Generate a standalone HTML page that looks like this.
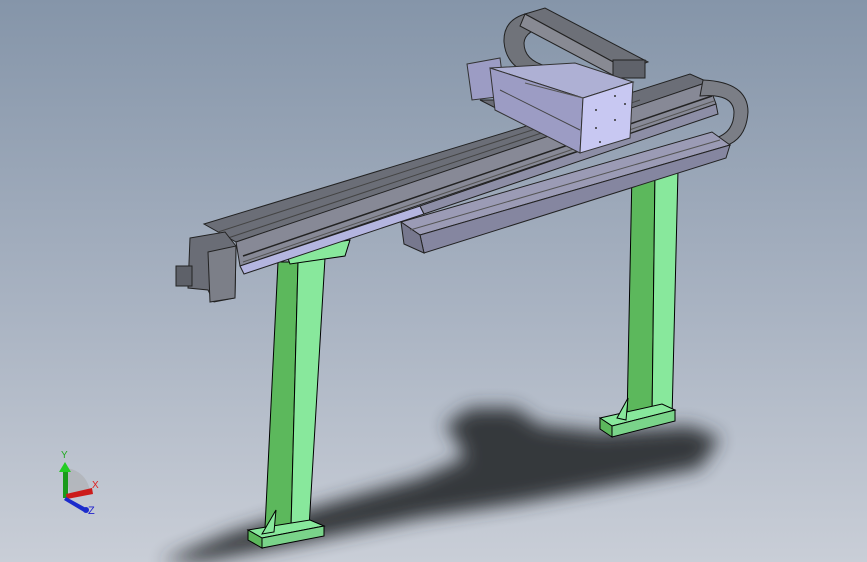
<!DOCTYPE html>
<html><head><meta charset="utf-8"><style>
html,body{margin:0;padding:0;width:867px;height:562px;overflow:hidden}
svg{display:block}
text{font-family:"Liberation Sans",sans-serif}
</style></head><body>
<svg width="867" height="562" viewBox="0 0 867 562" xmlns="http://www.w3.org/2000/svg">
<defs>
<linearGradient id="bg" x1="0" y1="0" x2="0" y2="1">
<stop offset="0" stop-color="#8595a9"/><stop offset="0.55" stop-color="#a9b3c2"/><stop offset="1" stop-color="#c9ced7"/>
</linearGradient>
<filter id="bl" x="-20%" y="-20%" width="140%" height="140%"><feGaussianBlur stdDeviation="9"/></filter>
</defs>
<rect width="867" height="562" fill="url(#bg)"/>
<g filter="url(#bl)" fill="#2e3036" opacity="0.95">
<polygon points="445,425 470,408 515,408 540,425 600,432 690,426 720,438 700,468 600,488 520,503 420,518 300,543 200,562 160,562 230,533 330,503 420,478 465,458 455,438"/>
</g>
<!-- right leg -->
<polygon points="632,172 655,172 652,420 627,420" fill="#5cb85c" stroke="#000" stroke-width="1"/>
<polygon points="655,172 678,170 672,418 652,420" fill="#88e89c" stroke="#000" stroke-width="1"/>
<polygon points="600,418 662,404 675,410 612,426" fill="#88e89c" stroke="#000" stroke-width="1"/>
<polygon points="600,418 612,426 612,437 600,429" fill="#5cb85c" stroke="#000" stroke-width="1"/>
<polygon points="612,426 675,410 675,421 612,437" fill="#7ad48a" stroke="#000" stroke-width="1"/>
<polygon points="617,418 628,398 626,420" fill="#88e89c" stroke="#000" stroke-width="1"/>
<!-- left leg -->
<polygon points="278,262 298,262 291,528 265,528" fill="#5cb85c" stroke="#000" stroke-width="1"/>
<polygon points="298,262 325,258 309,528 291,528" fill="#88e89c" stroke="#000" stroke-width="1"/>
<polygon points="285,250 350,240 345,256 290,264" fill="#88e89c" stroke="#000" stroke-width="1"/>
<polygon points="248,530 310,520 324,526 262,538" fill="#88e89c" stroke="#000" stroke-width="1"/>
<polygon points="248,530 262,538 262,548 248,540" fill="#5cb85c" stroke="#000" stroke-width="1"/>
<polygon points="262,538 324,526 324,536 262,548" fill="#7ad48a" stroke="#000" stroke-width="1"/>
<polygon points="262,534 276,510 274,532" fill="#88e89c" stroke="#000" stroke-width="1"/>
<!-- upper cable chain -->
<path d="M535,12 Q503,16 504,42 Q506,66 530,74 L546,66 Q524,60 524,43 Q525,30 548,26 Z" fill="#70737a" stroke="#222" stroke-width="1"/>
<polygon points="525,14 545,8 648,62 628,70" fill="#6d7078" stroke="#222" stroke-width="1"/>
<polygon points="525,14 628,70 622,80 520,26" fill="#888a93" stroke="#222" stroke-width="1"/>
<rect x="613" y="60" width="32" height="18" fill="#5f626a" stroke="#222" stroke-width="1"/>
<!-- back beam -->
<polygon points="204,224 520,128 690,74 708,82 540,140 236,242" fill="#6b6e77" stroke="#222" stroke-width="1"/>
<polygon points="236,242 708,82 716,104 240,266" fill="#878996" stroke="#222" stroke-width="1"/>
<polygon points="240,266 420,206 424,214 244,274" fill="#b4b5e0" stroke="#222" stroke-width="1"/>
<polygon points="420,206 716,104 718,114 424,214" fill="#8d8ea6" stroke="#222" stroke-width="1"/>
<line x1="218" y1="232" x2="600" y2="108" stroke="#444" stroke-width="1"/>
<line x1="228" y1="238" x2="640" y2="100" stroke="#444" stroke-width="1"/>
<line x1="243" y1="256" x2="712" y2="96" stroke="#222" stroke-width="1.5"/>
<line x1="243" y1="262" x2="714" y2="101" stroke="#555" stroke-width="1"/>
<!-- right chain loop -->
<path d="M703,80 Q748,82 748,112 Q746,145 715,148 L712,139 Q734,134 734,112 Q733,93 700,96 Z" fill="#7b7e86" stroke="#222" stroke-width="1"/>
<!-- front trough -->
<polygon points="401,222 712,132 730,145 420,235" fill="#9b9bb5" stroke="#222" stroke-width="1"/>
<polygon points="420,235 730,145 726,158 424,253" fill="#8586a0" stroke="#222" stroke-width="1"/>
<polygon points="401,222 420,235 424,253 404,244" fill="#77788e" stroke="#222" stroke-width="1"/>
<line x1="410" y1="230" x2="720" y2="140" stroke="#555" stroke-width="1"/>
<!-- carriage -->
<polygon points="467,64 500,58 505,96 472,100" fill="#9c9cc4" stroke="#333" stroke-width="1"/>
<polygon points="480,100 520,100 600,140 578,150" fill="#6a6c76" stroke="#222" stroke-width="1"/>
<polygon points="490,68 575,63 633,82 583,98" fill="#aeb0d4" stroke="#333" stroke-width="1"/>
<polygon points="490,68 583,98 580,153 495,110" fill="#9c9cc4" stroke="#333" stroke-width="1"/>
<polygon points="583,98 633,82 630,138 580,153" fill="#c8c8f2" stroke="#333" stroke-width="1"/>
<line x1="500" y1="90" x2="580" y2="130" stroke="#444"/>
<line x1="525" y1="83" x2="583" y2="98" stroke="#555"/>
<g fill="#333"><circle cx="596" cy="110" r="1"/><circle cx="596" cy="128" r="1"/><circle cx="615" cy="96" r="1"/><circle cx="615" cy="120" r="1"/><circle cx="625" cy="104" r="1"/><circle cx="600" cy="142" r="1"/></g>
<!-- motor -->
<polygon points="190,238 225,232 236,246 235,298 214,302 208,290 188,288" fill="#6a6d76" stroke="#222" stroke-width="1"/>
<polygon points="208,252 236,246 235,298 210,302" fill="#7c7f88" stroke="#222" stroke-width="1"/>
<rect x="176" y="266" width="16" height="20" fill="#5e6169" stroke="#222" stroke-width="1"/>
<!-- triad -->
<path d="M64,468 A26,26 0 0 1 90,494 L70,494 Z" fill="#b0b3b8" opacity="0.8"/>
<rect x="63" y="470" width="5" height="28" fill="#1a9a1a"/>
<polygon points="59,472 65,462 71,472" fill="#22cc22"/>
<polygon points="66,494 92,488 93,494 67,499" fill="#cc1b1b"/>
<polygon points="66,497 86,508 84,512 64,500" fill="#1b2bcc"/>
<circle cx="86" cy="510" r="3" fill="#1b2bcc"/>
<text x="61" y="458" font-size="10" fill="#22aa22">Y</text>
<text x="92" y="488" font-size="10" fill="#d22">X</text>
<text x="88" y="514" font-size="11" fill="#22c">Z</text>
</svg>
</body></html>
